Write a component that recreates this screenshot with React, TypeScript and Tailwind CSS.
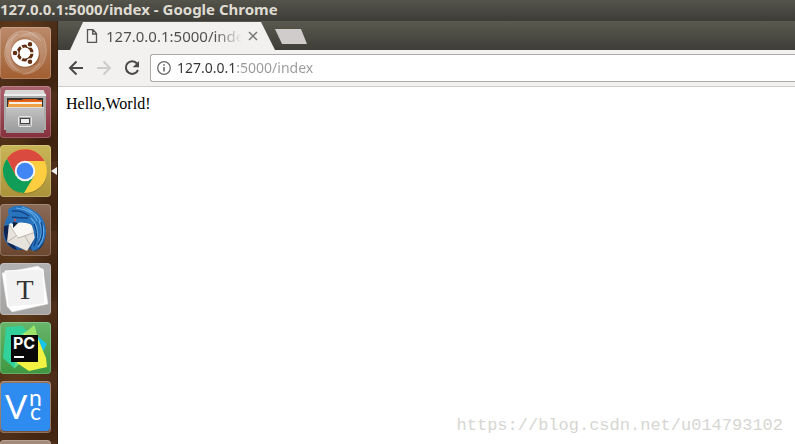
import type { ReactNode } from 'react';

function UbuntuIcon() {
  return (
    <svg viewBox="0 0 51 52" className="size-full" aria-hidden="true">
      <g fill="#fff" fillOpacity=".16">
        <path d="M6 20C8 2 30-2 41 14C30 4 14 8 11 24C9 34 15 42 22 45C10 43 4 32 6 20z" />
        <path d="M14 44C0 34 2 14 18 7C8 16 9 30 20 36C28 41 38 38 41 35C36 46 24 50 14 44z" />
        <path d="M43 10C52 28 42 48 22 47C36 45 44 32 38 20C34 12 26 8 18 11C26 4 37 2 43 10z" />
      </g>
      <g fill="none" stroke="#fff" strokeOpacity=".22">
        <path d="M6 20C8 2 30-2 41 14M14 44C0 34 2 14 18 7M43 10C52 28 42 48 22 47" />
      </g>
      <circle cx="25" cy="27" r="14.500" fill="#5b2b10" fillOpacity=".25" />
      <circle cx="25" cy="26" r="13.800" fill="#fff" />
      <circle cx="25" cy="26" r="7" fill="none" stroke="#632f12" strokeWidth="3.200" />
      <path d="M25 26L20 34.700M25 26L20 17.300M25 26H35" stroke="#fff" strokeWidth="1.500" />
      <circle cx="25" cy="26" r="5.200" fill="#fff" />
      <g fill="#632f12" stroke="#fff" strokeWidth="1.200">
        <circle cx="15" cy="26" r="2.900" />
        <circle cx="30" cy="17.300" r="2.900" />
        <circle cx="30" cy="34.700" r="2.900" />
      </g>
    </svg>
  );
}

function FilesIcon() {
  return (
    <svg viewBox="0 0 51 52" className="size-full" aria-hidden="true">
      <defs>
        <linearGradient id="cabinet" x2="0" y2="1">
          <stop stopColor="#c4c4c4" />
          <stop offset="1" stopColor="#989898" />
        </linearGradient>
      </defs>
      <path d="M5 5q0-1 1-1h37q1 0 1 1l2 5v33H4V10z" fill="#d8d8d8" />
      <path d="M4 9h42v35H4z" fill="#aaa" />
      <path d="M4 8h42v2H4z" fill="#eee" />
      <path d="M7 12h36v10H7z" fill="#35302e" />
      <path d="M8 15l1-1h13l1-1h14l1 1h4v8H8z" fill="#d95c18" />
      <path d="M9 16h33v3H9z" fill="#f4f0e8" />
      <path d="M9 15h32v1H9z" fill="#e8661a" />
      <path d="M8 18h34v4H8z" fill="#f2a044" />
      <path d="M6 21h38v26H6z" fill="url(#cabinet)" />
      <path d="M6 21h38v1H6z" fill="#ddd" />
      <rect x="18.500" y="30.500" width="13" height="10" rx="1" fill="#aaa" stroke="#e5e5e5" />
      <rect x="20.500" y="32.500" width="9" height="5" fill="#eee" stroke="#444" />
    </svg>
  );
}

function ChromeIcon() {
  return (
    <svg viewBox="0 0 51 52" className="size-full" aria-hidden="true">
      <circle cx="25" cy="27" r="22" fill="#7b6622" fillOpacity=".5" />
      <circle cx="25" cy="26" r="22" fill="#ffcd40" />
      <path d="M7 13.500A22 22 0 0 0 24 48L34 31 16 31z" fill="#0f9d58" />
      <path d="M7 13.500A22 22 0 0 1 44.500 16H25L16 31z" fill="#db4a3e" />
      <circle cx="25" cy="26" r="10.300" fill="#f4f4f4" />
      <circle cx="25" cy="26" r="8.300" fill="#4285f4" />
    </svg>
  );
}

function ThunderbirdIcon() {
  return (
    <svg viewBox="0 0 51 52" className="size-full" aria-hidden="true">
      <defs>
        <linearGradient id="bird" x2="1" y2="1">
          <stop stopColor="#2379c2" />
          <stop offset=".5" stopColor="#2468b0" />
          <stop offset="1" stopColor="#0c2c62" />
        </linearGradient>
      </defs>
      <path d="M17 46C7 43 2 35 4 25C5 17 6 14 9 11C7 8 8 5 10 4C17-1 28 2 34 7C43 11 46 21 46 29C45 40 41 45 36 47L29 45z" fill="url(#bird)" />
      <path d="M4 22C3 34 8 44 17 46L12 37C8 31 8 26 9 21z" fill="#0c244f" />
      <path d="M9 20L32 22L36 32L27 47L7 38z" fill="#e6e2dc" />
      <path d="M9 20L17 34L31 29L33 20 16 17z" fill="#faf8f5" />
      <path d="M9 20l9 14L36 28M7 38l9-6M25 32l5 9" fill="none" stroke="#b5aca2" strokeWidth=".8" />
      <path d="M9 5C8 14 10 19 14 21C20 17 26 19 30 20C35 23 33 29 35 34L31 43L32 47C38 47 46 38 46 28C46 18 41 11 34 7C25 1 15 1 9 5z" fill="#2873bb" />
      <path d="M16 4Q33 6 37 17M22 3Q40 9 42 23M31 14Q39 22 37 34M39 17Q44 27 39 38M43 22Q46 33 38 43" fill="none" stroke="#62abe9" strokeWidth="1.200" />
      <path d="M12 7Q21 6 29 12M12 13Q20 14 28 14M34 20Q39 31 34 42M41 18Q45 30 38 41" fill="none" stroke="#114383" strokeWidth="1.300" />
      <path d="M13 18l0 6 5-5z" fill="#101e33" />
      <circle cx="15" cy="16" r="1.300" fill="#c0524c" />
    </svg>
  );
}

function TyporaIcon() {
  return (
    <svg viewBox="0 0 51 52" className="size-full" aria-hidden="true">
      <path d="M2 10L38 3l5 4 5 34-36 8-5-6z" fill="#fff" stroke="#ddd" strokeWidth=".5" />
      <path d="M5 8L43 6l2 35-37 3z" fill="#f2f2f2" stroke="#fff" />
      <text x="25" y="36" textAnchor="middle" fontSize="28" fontFamily="Liberation Serif, serif" fill="#333">T</text>
    </svg>
  );
}

function PyCharmIcon() {
  return (
    <svg viewBox="0 0 51 52" className="size-full" aria-hidden="true">
      <path d="M6 5l16-1 8 8-12 31-4 3L3 36z" fill="#32d19c" />
      <path d="M21 12L35 4l2 10-18 28-5 5z" fill="#63df8a" />
      <path d="M36 13l11 9-7 13-8-5z" fill="#16c4e8" />
      <path d="M22 14L34 4l3 10 9 22 1 9-18 4-12-8z" fill="#f2f243" />
      <path d="M26 11l8-8 3 12H26z" fill="#9be36b" />
      <path d="M11 13h27v27H11z" fill="#090909" />
      <text x="13" y="27" fontSize="16" fontWeight="700" fontFamily="Inter, sans-serif" fill="#fff">PC</text>
      <path d="M14 34h10v2H14z" fill="#fff" />
    </svg>
  );
}

function VncIcon() {
  return (
    <svg viewBox="0 0 51 52" className="size-full" fill="#fff" fontFamily="Lato, sans-serif" aria-hidden="true">
      <rect x="1" y="2" width="49" height="48" rx="4" fill="#2e8cf0" />
      <text x="5" y="38" fontSize="33">V</text>
      <text x="29" y="25" fontSize="23">n</text>
      <text x="30" y="39" fontSize="23">c</text>
    </svg>
  );
}

type LauncherItem = { name: string; tile: string; icon?: ReactNode; active?: boolean };

const launcherItems: LauncherItem[] = [
  { name: 'Search your computer', tile: 'from-[#bb8a6b] to-[#a15e30]', icon: <UbuntuIcon /> },
  { name: 'Files', tile: 'from-[#a9626c] to-[#85303d]', icon: <FilesIcon /> },
  { name: 'Google Chrome', tile: 'from-[#c9b657] to-[#ab923a]', icon: <ChromeIcon />, active: true },
  { name: 'Thunderbird Mail', tile: 'from-[#8a6b58] to-[#6b472f]', icon: <ThunderbirdIcon /> },
  { name: 'Typora', tile: 'from-[#b2b2b2] to-[#a5a3a2]', icon: <TyporaIcon /> },
  { name: 'PyCharm', tile: 'from-[#67b56a] to-[#3f9740]', icon: <PyCharmIcon /> },
  { name: 'VNC Viewer', tile: 'from-[#96735d] to-[#765039]', icon: <VncIcon /> },
  { name: 'Workspace', tile: 'from-[#a58c7b] to-[#79583f]' },
];

function Launcher() {
  return (
    <nav
      aria-label="Launcher"
      className="flex w-[58px] shrink-0 flex-col gap-[7px] overflow-hidden border-r border-[#38200e] bg-[#4d2e18] bg-[radial-gradient(ellipse_at_30%_20%,#5f3b1a_0%,transparent_60%),radial-gradient(ellipse_at_80%_70%,#3c210e_0%,transparent_60%)] bg-size-[58px_70px] pt-1.5"
    >
      {launcherItems.map((item) => (
        <div key={item.name} className="flex shrink-0 items-center">
          <button
            type="button"
            aria-label={item.name}
            className={`h-[52px] w-[51px] overflow-hidden rounded-[4px] bg-linear-to-b inset-ring-1 inset-ring-white/20 ${item.tile}`}
          >
            {item.icon}
          </button>
          {item.active && (
            <svg viewBox="0 0 6 8" className="h-2 w-1.5" aria-hidden="true">
              <path d="M6 0v8L0 4z" fill="#eee" />
            </svg>
          )}
        </div>
      ))}
    </nav>
  );
}

function TabStrip() {
  return (
    <div className="flex h-[29px] items-end bg-linear-to-b from-[#5b5a50] to-[#3e3d37] pl-3">
      <div className="flex h-7 w-[205px] items-center bg-[#f2f1f0] px-4 [clip-path:polygon(13px_0,191px_0,100%_100%,0_100%)]">
        <svg viewBox="0 0 12 14" className="h-3.5 w-3 shrink-0" fill="none" stroke="#555" strokeWidth="1.300" aria-hidden="true">
          <path d="M1.500 .700h5.500l3.500 3.800v8.800h-9zM6.700 1v4h3.800" />
        </svg>
        <span className="ml-2 w-[136px] overflow-hidden bg-linear-to-r from-[#4d4d4d] from-80% to-transparent bg-clip-text text-[15px] leading-5 whitespace-nowrap text-transparent">
          127.0.0.1:5000/index
        </span>
        <button type="button" aria-label="Close tab" className="ml-1.5 shrink-0">
          <svg viewBox="0 0 10 10" className="size-2.5" stroke="#777" strokeWidth="1.500" aria-hidden="true">
            <path d="M1 1l8 8M9 1L1 9" />
          </svg>
        </button>
      </div>
      <button type="button" aria-label="New tab" className="mb-1.5 h-[15px] w-8 bg-[#cfcccb] [clip-path:polygon(0_0,26px_0,100%_100%,7px_100%)]" />
    </div>
  );
}

function Toolbar() {
  return (
    <div className="flex h-[37px] items-center border-b border-[#ccc] bg-[#f2f1f0] pl-2.5">
      <div className="flex gap-3">
        <button type="button" aria-label="Back">
          <svg viewBox="0 0 16 16" className="size-4" fill="none" stroke="#4a4a4a" strokeWidth="2" aria-hidden="true">
            <path d="M15 8H2.500M8.500 1.500L2 8l6.500 6.500" />
          </svg>
        </button>
        <button type="button" aria-label="Forward" disabled>
          <svg viewBox="0 0 16 16" className="size-4" fill="none" stroke="#ccc" strokeWidth="2" aria-hidden="true">
            <path d="M1 8h12.500M7.500 1.500L14 8l-6.500 6.500" />
          </svg>
        </button>
        <button type="button" aria-label="Reload">
          <svg viewBox="0 0 16 16" className="size-4" aria-hidden="true">
            <path d="M13 3.500A6.300 6.300 0 1 0 14 10" fill="none" stroke="#4a4a4a" strokeWidth="2" />
            <path d="M15 1v6.300H8.700z" fill="#4a4a4a" />
          </svg>
        </button>
      </div>
      <div className="ml-2.5 flex h-7 flex-1 items-center rounded-l-[3px] border border-r-0 border-[#aaa] bg-white pl-1.5">
        <svg viewBox="0 0 14 14" className="size-3.5 shrink-0" fill="none" stroke="#6b6b6b" aria-hidden="true">
          <circle cx="7" cy="7" r="6.300" strokeWidth="1.300" />
          <path d="M7 6v4.500M7 3.300v1.500" strokeWidth="1.600" />
        </svg>
        <input
          type="text"
          aria-label="Address"
          defaultValue="127.0.0.1:5000/index"
          className="ml-1.5 min-w-0 flex-1 bg-[linear-gradient(to_right,#333_58px,#999_58px)] bg-clip-text text-[14px] leading-5 text-transparent outline-none"
        />
      </div>
    </div>
  );
}

export default function App() {
  return (
    <div className="flex h-screen flex-col overflow-hidden bg-white font-['Noto_Sans','Open_Sans',sans-serif]">
      <header className="h-[21px] shrink-0 bg-linear-to-b from-[#55544b] to-[#3d3c37]">
        <h1 className="text-[15px] leading-[18px] font-bold text-[#dfdbd2]">127.0.0.1:5000/index - Google Chrome</h1>
      </header>
      <div className="flex min-h-0 flex-1">
        <Launcher />
        <div className="flex min-w-0 flex-1 flex-col">
          <TabStrip />
          <Toolbar />
          <main className="flex flex-1 flex-col justify-between p-2 font-['Liberation_Serif',serif] text-base leading-[18px] text-black">
            <p>Hello,World!</p>
            <p className="self-end pr-1 font-['Liberation_Mono',monospace] text-[17px] leading-5 text-[#d6d6d2]">
              https://blog.csdn.net/u014793102
            </p>
          </main>
        </div>
      </div>
    </div>
  );
}
